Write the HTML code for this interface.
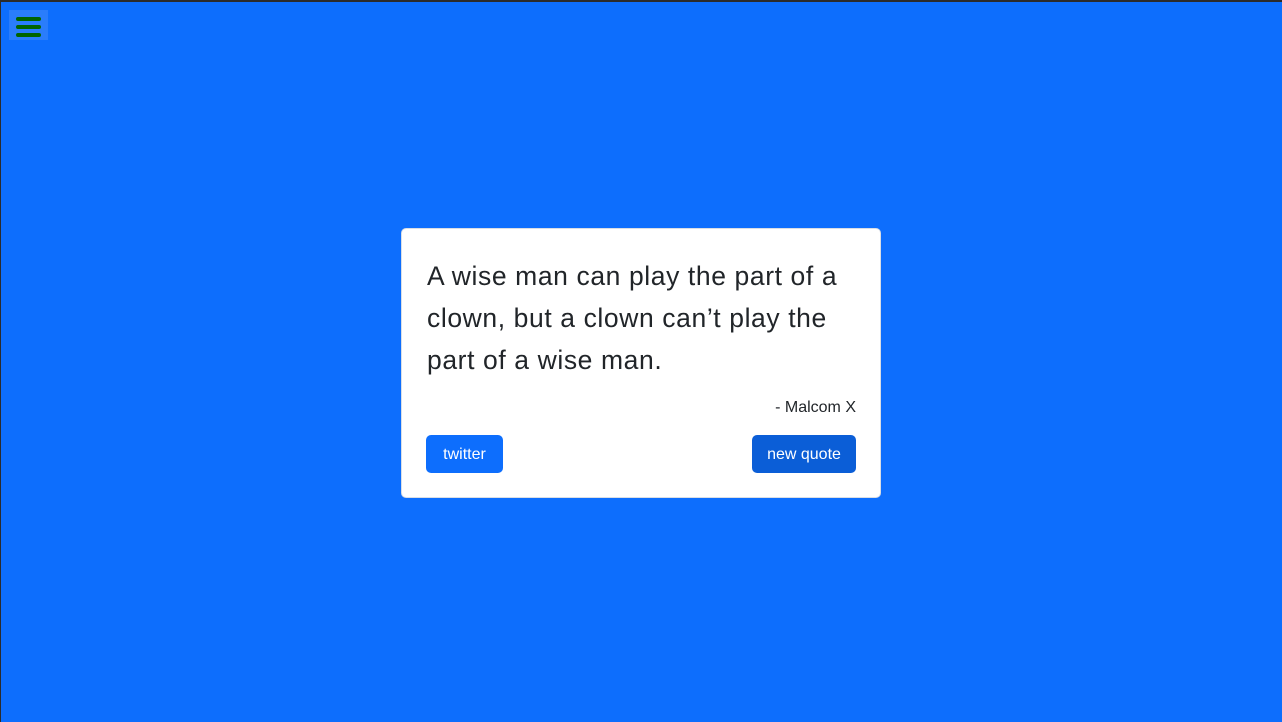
<!DOCTYPE html>
<html><head><style>
html,body{margin:0;padding:0}
body{width:1282px;height:722px;background:#0d6efd;position:relative;overflow:hidden;font-family:"Liberation Sans",sans-serif;}
.tb{position:absolute;left:0;top:0;width:1282px;height:2px;background:#2b2b2b}
.lb{position:absolute;left:0;top:0;width:1px;height:722px;background:#2b2b2b}
.menu{position:absolute;left:9px;top:10px;width:39px;height:30px;background:#2a7dfb}
.bar{position:absolute;left:7px;width:25px;height:4px;border-radius:2px;background:#006400}
.card{position:absolute;left:401px;top:228px;width:480px;height:270px;background:#fff;border-radius:5px;box-sizing:border-box;border:1px solid #d9dee5}
.q{position:absolute;left:25px;top:26px;width:428px;font-size:26.5px;letter-spacing:0.6px;line-height:42px;color:#212529}
.a{position:absolute;right:24px;top:170px;font-size:16px;color:#212529}
.btn{position:absolute;top:206px;height:38px;line-height:40px;color:#fff;font-size:16px;border-radius:5px;text-align:center}
</style></head><body>
<div class="tb"></div><div class="lb"></div>
<div class="menu"><div class="bar" style="top:7px"></div><div class="bar" style="top:15px"></div><div class="bar" style="top:23px"></div></div>
<div class="card">
<div class="q">A wise man can play the part of a clown, but a clown can’t play the part of a wise man.</div>
<div class="a">- Malcom X</div>
<div class="btn" style="left:24px;width:77px;background:#0d6efd">twitter</div>
<div class="btn" style="right:24px;width:104px;background:#0b5ed7">new quote</div>
</div>
</body></html>
